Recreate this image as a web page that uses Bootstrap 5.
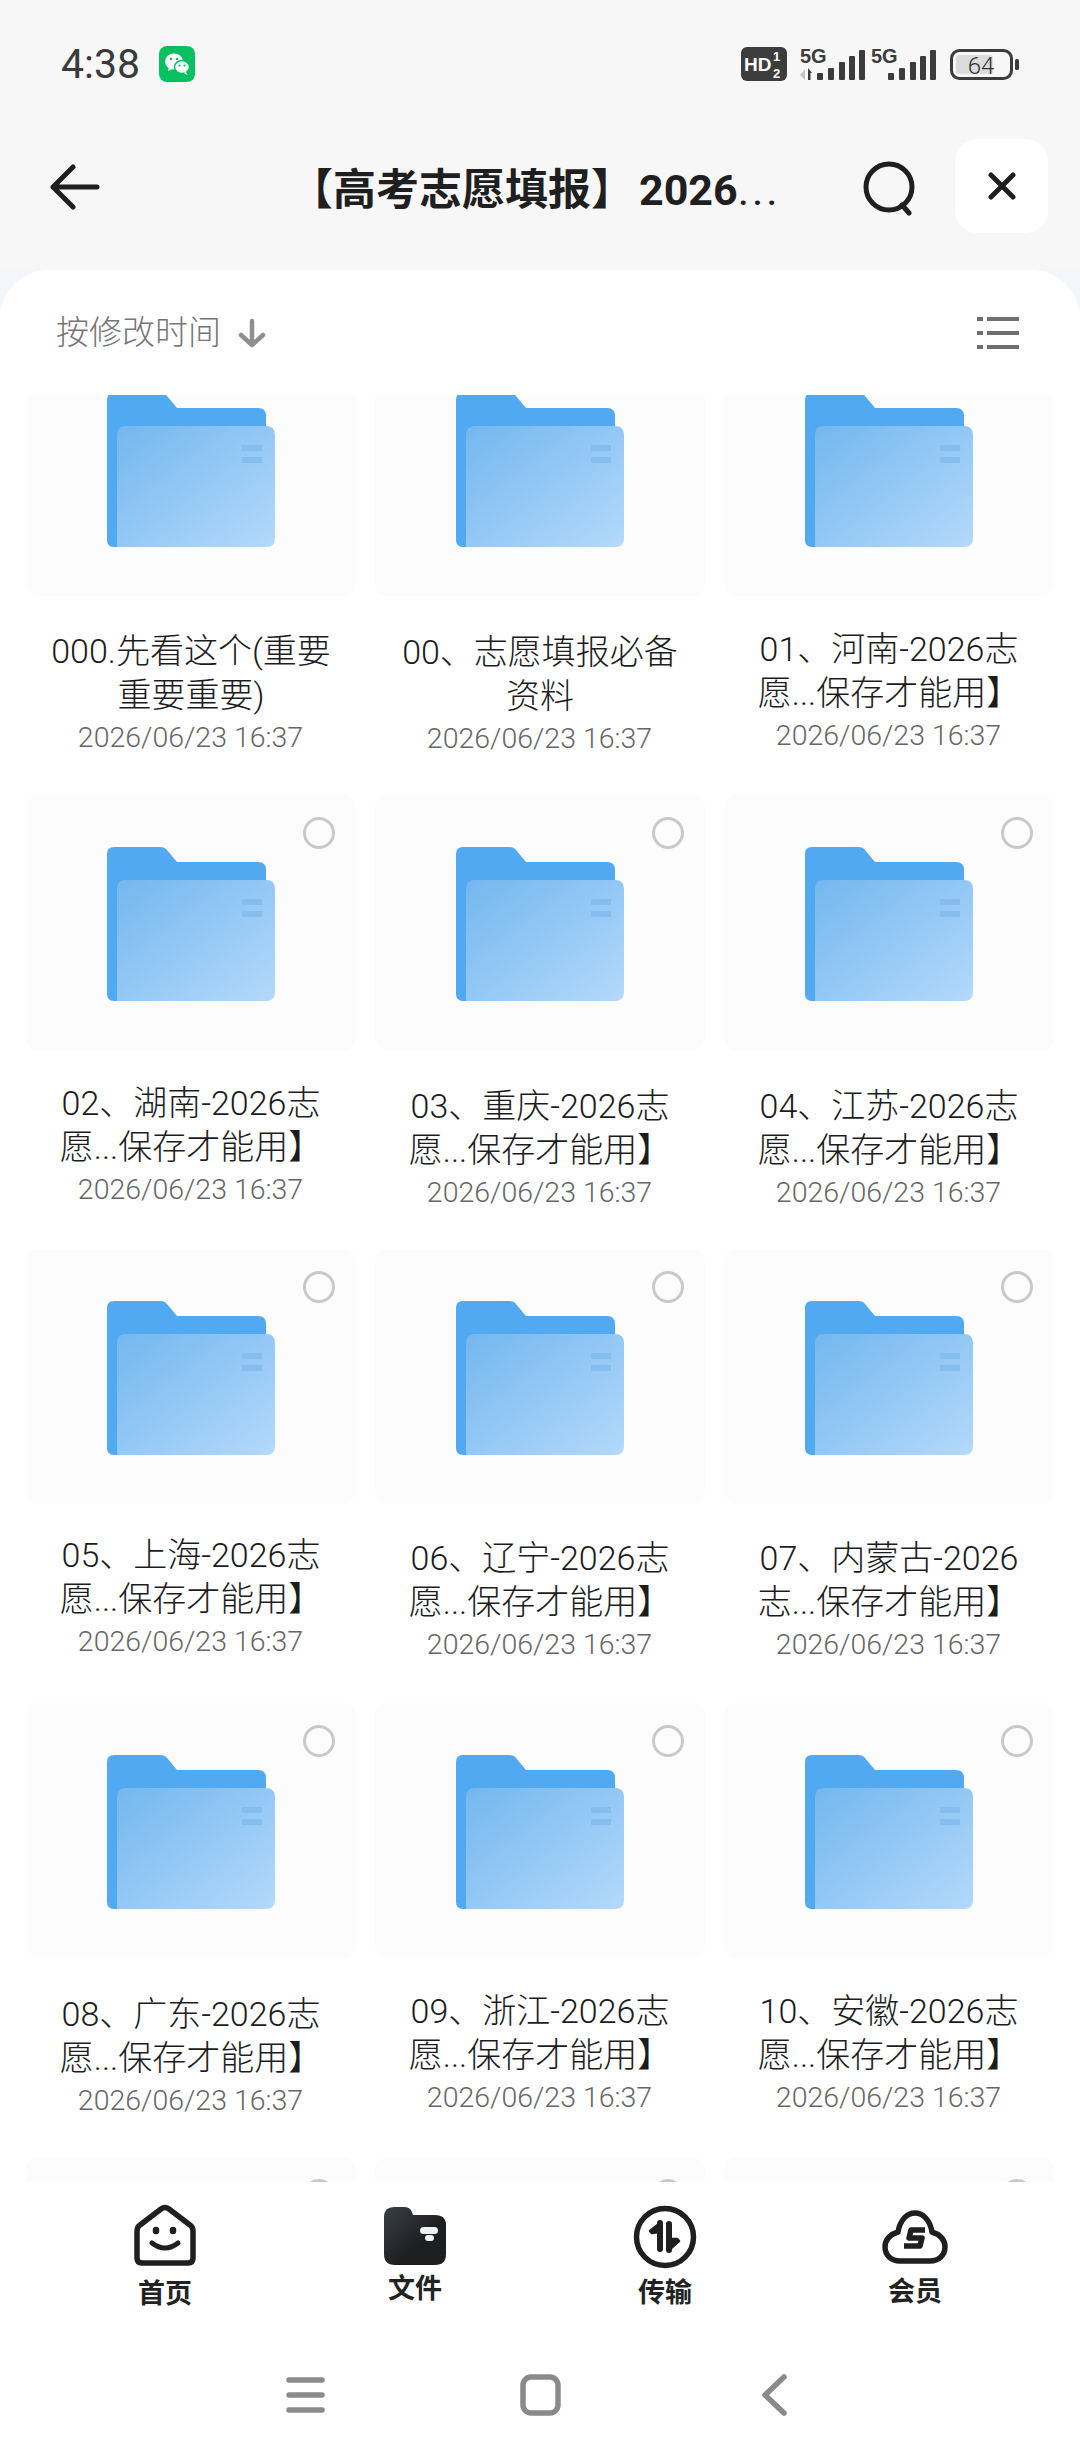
<!DOCTYPE html>
<html lang="zh-CN">
<head>
<meta charset="UTF-8" />
<title>文件</title>
<link href="https://cdn.jsdelivr.net/npm/bootstrap@5.3.0/dist/css/bootstrap.min.css" rel="stylesheet" />
<style>
  html, body { width: 1080px; height: 2460px; overflow: hidden; }
  body {
    background: #f7f7f7;
    font-family: Roboto, "Noto Sans CJK SC", sans-serif;
    color: #1f1f1f;
  }
  .status-row { height: 130px; padding: 46px 60px 0 61px; }
  .clock { font-size: 41px; line-height: 36px; color: #3a3a3a; margin-right: 3px; }
  .wx-badge { width: 36px; height: 36px; border-radius: 8px; background: #07c160; }
  .head-row { height: 140px; padding: 9px 32px 0 50px; }
  .back-ico { margin-top: 25px; }
  .head-title {
    width: 490px; margin: 21px 0 0 190px; font-size: 43px; font-weight: 700; line-height: 60px;
    white-space: nowrap;
  }
  .title-num { margin-left: 5px; }
  .dots { font-weight: 400; letter-spacing: 3px; }
  .search-ico { margin: 22px 0 0 81px; }
  .close-btn { width: 93px; height: 94px; border-radius: 22px; background: #fff; }
  .sheet-wrap { background: #f3f6fa; }
  .sheet { background: #fff; border-radius: 48px 48px 0 0; height: 1912px; }
  .sort-row { height: 125px; padding: 45px 61px 0 56px; }
  .sort-label { font-size: 33px; line-height: 36px; color: #767676; font-weight: 300; }
  .list-ico { margin-top: 2px; }
  .file-clip { height: 1787px; overflow: hidden; }
  .file-grid {
    display: grid; grid-template-columns: repeat(3, 330px); column-gap: 19px;
    padding-left: 26px; margin-top: -54px;
  }
  .file-cell { height: 454px; text-align: center; }
  .thumb { height: 255px; padding-top: 52px; border-radius: 12px; background: #fcfcfc; }
  .tick {
    position: absolute; top: 22px; right: 21px; width: 32px; height: 32px;
    border: 3px solid #c9c9c9; border-radius: 50%;
  }
  .file-name { font-size: 34px; line-height: 44px; font-weight: 300; color: #1c1c1c; padding: 0 19px; }
  .file-date { font-size: 28.5px; line-height: 36px; font-weight: 300; color: #666; margin: 3px 1px 0 0; }
  .tab-row { height: 158px; background: #fff; }
  .tab-item { width: 250px; }
  .tab-home { padding-top: 22px; }
  .tab-files { padding-top: 25px; }
  .tab-trans { padding-top: 23px; }
  .tab-vip { padding-top: 28px; }
  .tab-label { font-size: 27px; line-height: 34px; font-weight: 700; color: #222; margin-top: 11px; }
  .tab-files .tab-label, .tab-trans .tab-label { margin-top: 7px; }
  .nav-row { height: 120px; background: #fff; }
  .nav-ico { margin-top: 25px; }
</style>
</head>
<body>
<div class="d-flex flex-column">

  <!-- barra de estado -->
  <div class="status-row d-flex justify-content-between align-items-start">
    <div class="d-flex align-items-center gap-3">
      <span class="clock">4:38</span>
      <span class="wx-badge d-flex align-items-center justify-content-center">
        <svg width="30" height="30" viewBox="0 0 30 30">
          <ellipse cx="12" cy="12.5" rx="9" ry="8" fill="#fff"/>
          <path d="M7 18l-1 4 4.500-2z" fill="#fff"/>
          <ellipse cx="20" cy="18" rx="7.500" ry="6.500" fill="#fff" stroke="#07c160" stroke-width="1.500"/>
          <path d="M24 23l1.500 3-4-2z" fill="#fff"/>
          <circle cx="9" cy="10" r="1.300" fill="#07c160"/><circle cx="15" cy="10" r="1.300" fill="#07c160"/>
          <circle cx="17.500" cy="16.500" r="1.100" fill="#07c160"/><circle cx="22.500" cy="16.500" r="1.100" fill="#07c160"/>
        </svg>
      </span>
    </div>
    <svg width="279" height="36" viewBox="741 46 279 36">
      <rect x="741" y="47" width="46" height="34" rx="6" fill="#3c3c3c"/>
      <text x="744" y="71" font-family="Liberation Sans" font-weight="700" font-size="19" fill="#fff">HD</text>
      <text x="773" y="61" font-family="Liberation Sans" font-weight="700" font-size="13" fill="#fff">1</text>
      <text x="773" y="78" font-family="Liberation Sans" font-weight="700" font-size="13" fill="#fff">2</text>
      <text x="800" y="63" font-family="Liberation Sans" font-weight="700" font-size="20" fill="#3c3c3c">5G</text>
      <path d="M805 69v11l-5-5z" fill="#c4c4c4"/>
      <g fill="#3c3c3c">
        <path d="M808 68l4 5h-1.500v7h-2.500z"/>
        <rect x="817" y="73" width="6" height="7" rx="1"/><rect x="828" y="68" width="6" height="12" rx="1"/>
        <rect x="839" y="62" width="6" height="18" rx="1"/><rect x="849" y="56" width="6" height="24" rx="1"/>
        <rect x="859" y="50" width="6" height="30" rx="1"/>
      </g>
      <text x="871" y="63" font-family="Liberation Sans" font-weight="700" font-size="20" fill="#3c3c3c">5G</text>
      <g fill="#3c3c3c">
        <rect x="888" y="73" width="6" height="7" rx="1"/><rect x="899" y="68" width="6" height="12" rx="1"/>
        <rect x="910" y="62" width="6" height="18" rx="1"/><rect x="920" y="56" width="6" height="24" rx="1"/>
        <rect x="930" y="50" width="6" height="30" rx="1"/>
      </g>
      <rect x="951.500" y="50.500" width="60" height="28" rx="8" fill="none" stroke="#3c3c3c" stroke-width="3"/>
      <rect x="956" y="55" width="37" height="19" rx="3" fill="#dcdcdc"/>
      <rect x="1015" y="59" width="4" height="11" rx="1.500" fill="#3c3c3c"/>
      <text x="981" y="74" text-anchor="middle" font-family="Roboto" font-weight="300" font-size="24" fill="#333">64</text>
    </svg>
  </div>

  <!-- encabezado -->
  <div class="head-row d-flex align-items-start">
    <svg class="back-ico flex-shrink-0" width="50" height="46" viewBox="0 0 50 46" fill="none" stroke="#1f1f1f" stroke-width="5" stroke-linecap="round" stroke-linejoin="round">
      <path d="M23 3L3 23l20 20M3 23h44"/>
    </svg>
    <div class="head-title">【高考志愿填报】<span class="title-num">2026</span><span class="dots">...</span></div>
    <svg class="search-ico flex-shrink-0" width="56" height="55" viewBox="0 0 56 55" fill="none" stroke="#1f1f1f" stroke-width="5" stroke-linecap="round">
      <circle cx="28" cy="26" r="23"/><path d="M41 44l7 8"/>
    </svg>
    <div class="close-btn d-flex align-items-center justify-content-center ms-auto">
      <svg width="28" height="28" viewBox="0 0 28 28" stroke="#1f1f1f" stroke-width="5" stroke-linecap="round"><path d="M3 3l22 22M25 3L3 25"/></svg>
    </div>
  </div>

  <div class="sheet-wrap">
    <div class="sheet">
      <div class="sort-row d-flex justify-content-between align-items-start">
        <div class="d-flex align-items-center gap-3">
          <span class="sort-label">按修改时间</span>
          <svg width="30" height="30" viewBox="0 0 30 30" fill="none" stroke="#8f8f8f" stroke-width="4.500" stroke-linecap="round" stroke-linejoin="round"><path d="M15 3v24M4 17l11 10 11-10"/></svg>
        </div>
        <svg class="list-ico" width="42" height="33" viewBox="0 0 42 33" fill="#6f6f6f">
          <rect x="0" y="0" width="6" height="4"/><rect x="10" y="0" width="32" height="4"/>
          <rect x="0" y="14" width="6" height="4"/><rect x="10" y="14" width="32" height="4"/>
          <rect x="0" y="28" width="6" height="4"/><rect x="10" y="28" width="32" height="4"/>
        </svg>
      </div>
      <div class="file-clip"><div id="lista" class="file-grid"></div></div>
    </div>
  </div>

  <!-- pestañas -->
  <div class="tab-row d-flex justify-content-center">
    <div class="tab-item tab-home d-flex flex-column align-items-center">
      <svg width="62" height="62" viewBox="0 0 62 62" fill="none" stroke="#1f1f1f" stroke-width="5.500" stroke-linejoin="round">
        <path d="M27 5L6 21q-3 2-3 6v27q0 5 5 5h46q5 0 5-5V27q0-4-3-6L35 5q-4-3-8 0z"/>
        <path d="M22 26v1M39 26v1" stroke-width="6.500" stroke-linecap="round"/>
        <path d="M18 39q13 10 26 0" stroke-width="5" stroke-linecap="round"/>
      </svg>
      <span class="tab-label">首页</span>
    </div>
    <div class="tab-item tab-files d-flex flex-column align-items-center">
      <svg width="62" height="58" viewBox="0 0 62 58">
        <defs><linearGradient id="gf" x1="0" y1="0" x2="1" y2="1"><stop offset="0" stop-color="#3b4048"/><stop offset=".6" stop-color="#1d1e20"/></linearGradient></defs>
        <path d="M0 10Q0 0 10 0h10q6 0 8 5l1 3h22q11 0 11 10v29q0 11-11 11H11Q0 58 0 47z" fill="url(#gf)"/>
        <rect x="36" y="20" width="18" height="7" rx="3.500" fill="#f0f0f0"/><rect x="41" y="28" width="9" height="6" rx="3" fill="#f0f0f0"/>
      </svg>
      <span class="tab-label">文件</span>
    </div>
    <div class="tab-item tab-trans d-flex flex-column align-items-center">
      <svg width="64" height="64" viewBox="0 0 64 64" fill="none" stroke="#1f1f1f" stroke-width="5.500">
        <circle cx="32" cy="32" r="28.500"/>
        <path d="M27 18v26M36 19v26" stroke-width="6" stroke-linecap="round"/>
        <path d="M27 18L17 26l2 2 8-1zM36 45l10-9-2-2-8 0z" fill="#1f1f1f" stroke-width="2.500" stroke-linejoin="round"/>
      </svg>
      <span class="tab-label">传输</span>
    </div>
    <div class="tab-item tab-vip d-flex flex-column align-items-center">
      <svg width="66" height="54" viewBox="0 0 66 54" fill="none" stroke="#1f1f1f" stroke-width="5.500" stroke-linejoin="round">
        <path d="M18 51H48C57 51 63 45 63 37 63 29 57 24 50 22 48 10 41 3 33 3 25 3 18 10 16 22 9 24 3 29 3 37 3 45 9 51 18 51z"/>
        <path d="M43 20H29L27 28H40L38 36H22" stroke-width="5.500"/>
      </svg>
      <span class="tab-label">会员</span>
    </div>
  </div>

  <!-- navegacion del sistema -->
  <div class="nav-row d-flex justify-content-center">
    <svg class="nav-ico" width="540" height="60" viewBox="270 2365 540 60" fill="none" stroke="#8a8a8a" stroke-width="5.500" stroke-linecap="round" stroke-linejoin="round">
      <path d="M289 2380h33M289 2395h33M289 2410h33"/>
      <rect x="523" y="2377" width="35" height="36" rx="8"/>
      <path d="M784 2377l-19 18 19 18"/>
    </svg>
  </div>
</div>

<script src="https://cdn.jsdelivr.net/npm/bootstrap@5.3.0/dist/js/bootstrap.bundle.min.js"></script>
<script>
  // nombres de las carpetas, el numero es el corrimiento del texto en cada celda
  const carpetas = [
    ['000.先看这个(重要重要重要)', 2], ['00、志愿填报必备资料', 3], ['01、河南-2026志愿...保存才能用】', 0],
    ['02、湖南-2026志愿...保存才能用】', 0], ['03、重庆-2026志愿...保存才能用】', 3], ['04、江苏-2026志愿...保存才能用】', 3],
    ['05、上海-2026志愿...保存才能用】', -2], ['06、辽宁-2026志愿...保存才能用】', 1], ['07、内蒙古-2026志...保存才能用】', 1],
    ['08、广东-2026志愿...保存才能用】', 3], ['09、浙江-2026志愿...保存才能用】', 0], ['10、安徽-2026志愿...保存才能用】', 0],
    ['', 0], ['', 0], ['', 0]
  ];

  const carpetaSvg = `
    <svg class="d-block mx-auto" width="168" height="154" viewBox="0 0 168 154">
      <defs><linearGradient id="gp" x1="0" y1="0" x2="1" y2="1"><stop offset="0" stop-color="#74b7ee"/><stop offset="1" stop-color="#b4d9fb"/></linearGradient></defs>
      <path d="M0 7q0-7 7-7h46q5 0 7 3l10 12 1 0h80q8 0 8 8v131H7q-7 0-7-7z" fill="#51a9f1"/>
      <path d="M10 42q0-9 9-9h140q9 0 9 9v103q0 9-9 9H10z" fill="url(#gp)"/>
      <rect x="135" y="52" width="20" height="6" fill="#84bdee"/><rect x="135" y="64" width="20" height="6" fill="#84bdee"/>
    </svg>`;

  const lista = document.getElementById('lista');
  carpetas.forEach(c => {
    lista.innerHTML += `
      <div class="file-cell">
        <div class="thumb position-relative">${carpetaSvg}<span class="tick"></span></div>
        <div style="padding-top:${31 + c[1]}px">
          <div class="file-name">${c[0]}</div>
          <div class="file-date">${c[0] ? '2026/06/23 16:37' : ''}</div>
        </div>
      </div>`;
  });
</script>
</body>
</html>
